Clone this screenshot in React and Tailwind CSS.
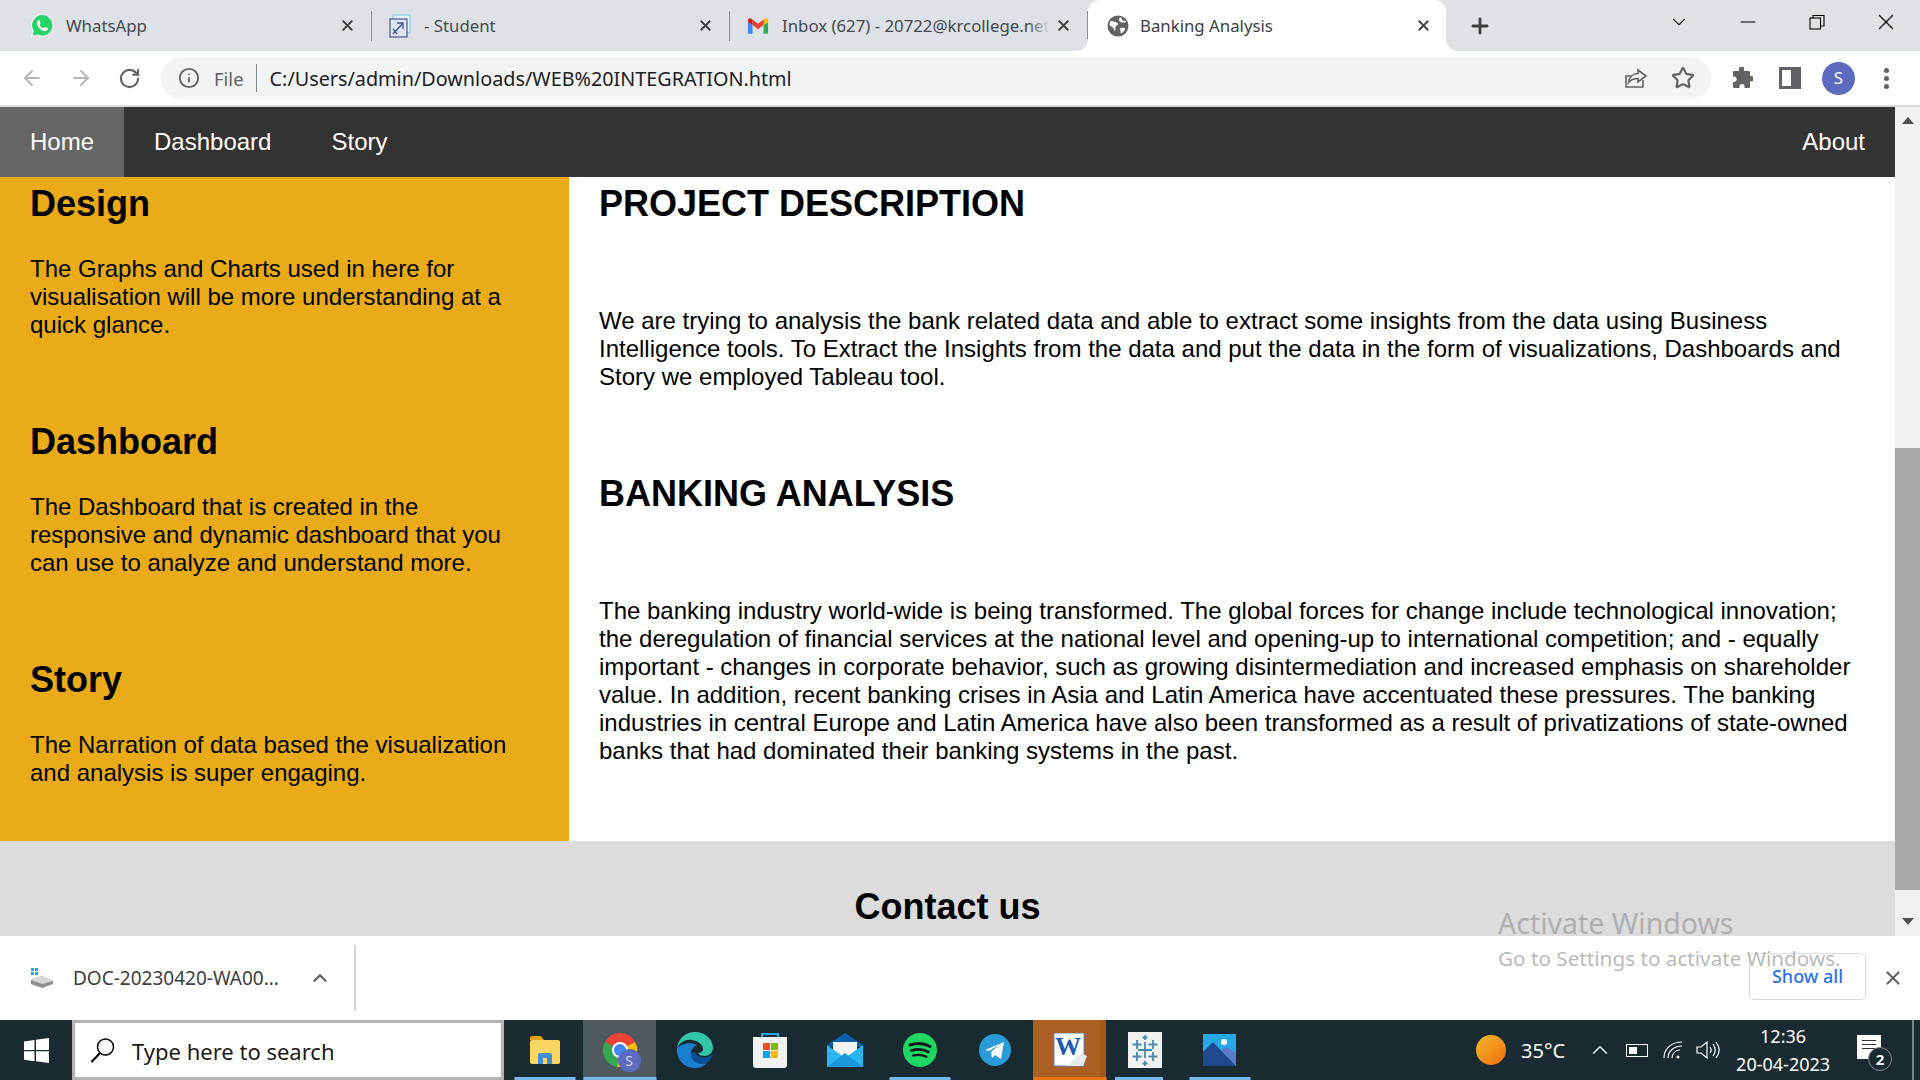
import { ArrowLeft, ArrowRight, RotateCw, Info, Star, X, Plus, ChevronDown, ChevronUp, Minus } from "lucide-react";

const uiFont = "font-['Noto_Sans',sans-serif]";

function WhatsAppIcon() {
  return (
    <svg width="25" height="25" viewBox="0 0 24 24">
      <path d="M12 1.500a10.400 10.400 0 0 0-8.900 15.800L1.600 22.600l5.400-1.400A10.400 10.400 0 1 0 12 1.500z" fill="#25d366" stroke="#fff" strokeWidth="1" />
      <path d="M8.600 6.800c-.3 0-.8.100-1.100.6-.4.500-1 1.300-1 2.500s.9 2.600 1.200 3c.3.400 1.800 2.800 4.300 3.800 2 .8 2.500.7 3 .6.600-.1 1.700-.7 2-1.400.2-.6.2-1.200.1-1.300l-2.300-1.200c-.3-.1-.5-.1-.7.100l-.9 1.100c-.2.200-.3.200-.6.100-1.400-.7-2.500-1.500-3.400-3-.2-.3 0-.4.100-.6l.7-.9c.1-.2.100-.4 0-.6L9.200 7.200c-.2-.4-.4-.4-.6-.4z" fill="#fff" />
    </svg>
  );
}

function StudentIcon() {
  return (
    <svg width="24" height="24" viewBox="0 0 24 24" fill="none">
      <rect x="5" y="1" width="17" height="18" fill="#e8f3fb" stroke="#8fd0ea" strokeWidth="1.200" />
      <rect x="2" y="5" width="17" height="18" fill="#dfe5f2" stroke="#44558f" strokeWidth="1.200" />
      <path d="M5 20L15 9M9 9h6v6M5 15l4 5" stroke="#44558f" strokeWidth="1.300" />
    </svg>
  );
}

function GmailIcon() {
  return (
    <svg width="22" height="18" viewBox="0 0 24 18">
      <path d="M1 5v11a1.500 1.500 0 0 0 1.500 1.500H6V8z" fill="#4285f4" />
      <path d="M18 8v9.500h3.500A1.500 1.500 0 0 0 23 16V5z" fill="#34a853" />
      <path d="M18 2v6l5-3.500V3c0-2-2.200-3-3.700-1.900z" fill="#fbbc04" />
      <path d="M6 8V2l6 4.500L18 2v6l-6 4.500z" fill="#ea4335" />
      <path d="M1 3v2l5 3V2L4.700 1.100C3.200 0 1 1 1 3z" fill="#c5221f" />
    </svg>
  );
}

function GlobeIcon() {
  return (
    <svg width="22" height="22" viewBox="0 0 22 22" className="ml-[4px]">
      <circle cx="11" cy="11" r="10.500" fill="#5f6368" />
      <path d="M3 6.500c2-.5 3.500-.5 5 .5s3 .5 3 2-2 1-2.500 2.500S9 15 8 15.500s-1-2-2-3-2.500-1-3.500-2.500zM14 2.500c1.500 1 .5 2.500 1.500 3s3-.5 3.500 1c.3 1-2.500 1-4 1s-2.500-1-3-2.500.8-2.500 2-2.500zM13.500 13c1.500-.5 4-.5 4.500.5s-1.500 3.500-3 4.500-1.500-1-1.500-2-1-2.500 0-3z" fill="#fff" />
    </svg>
  );
}

function Tab({ icon, title, active, fade }) {
  return (
    <div className={`relative flex h-[51px] w-[358px] shrink-0 items-center pl-[18px] ${active ? "rounded-t-[12px] bg-white" : ""}`}>
      {active && (
        <>
          <div className="absolute -left-[12px] bottom-0 h-[12px] w-[12px] bg-white">
            <div className="h-full w-full rounded-br-[12px] bg-[#dee1e6]" />
          </div>
          <div className="absolute -right-[12px] bottom-0 h-[12px] w-[12px] bg-white">
            <div className="h-full w-full rounded-bl-[12px] bg-[#dee1e6]" />
          </div>
        </>
      )}
      <div className="flex w-[20px] shrink-0 items-center justify-center [&>svg]:shrink-0">{icon}</div>
      <div className={`ml-[14px] w-[268px] overflow-hidden whitespace-nowrap text-[16.800px] ${active ? "text-[#3c4043]" : "text-[#45494e]"}`}>{title}</div>
      {fade && <div className="absolute left-[298px] top-[14px] h-[24px] w-[22px] bg-gradient-to-r from-transparent to-[#dee1e6]" />}
      <X size={17} strokeWidth={2.600} className="ml-[7px] shrink-0 text-[#3c4043]" />
      {!active && <div className="ml-[15px] h-[30px] w-px shrink-0 bg-[#8a8d91]" />}
    </div>
  );
}

function TabStrip() {
  return (
    <div className="flex h-[51px] shrink-0 items-center bg-[#dee1e6] pl-[14px]">
      <Tab icon={<WhatsAppIcon />} title="WhatsApp" />
      <Tab icon={<StudentIcon />} title="- Student" />
      <Tab icon={<GmailIcon />} title="Inbox (627) - 20722@krcollege.net" fade />
      <Tab icon={<GlobeIcon />} title="Banking Analysis" active />
      <Plus size={24} strokeWidth={2.800} className="ml-[22px] text-[#3c4043]" />
      <ChevronDown size={22} strokeWidth={1.200} className="ml-[176px] -mt-[7px] text-[#222]" />
      <div className="-mt-[7px] ml-[46px] flex items-center">
        <Minus size={24} strokeWidth={1.200} className="text-black" />
        <svg width="16" height="16" viewBox="0 0 16 16" fill="none" stroke="#000" strokeWidth="1.100" className="ml-[49px]">
          <rect x="1" y="4" width="10.500" height="11" />
          <path d="M4 4V1.500h11V12h-3.500" />
        </svg>
        <X size={26} strokeWidth={1.100} className="ml-[48px] text-black" />
      </div>
    </div>
  );
}

function Toolbar() {
  return (
    <div className="flex h-[54px] shrink-0 items-center bg-white">
      <ArrowLeft size={24} strokeWidth={1.800} className="ml-[20px] text-[#b4b6b9]" />
      <ArrowRight size={24} strokeWidth={1.800} className="ml-[25px] text-[#b4b6b9]" />
      <RotateCw size={23} strokeWidth={2.200} className="ml-[25px] text-[#5f6368]" />
      <div className="ml-[20px] flex h-[42px] w-[1550px] items-center rounded-full bg-[#f1f3f4]">
        <Info size={22} strokeWidth={2} className="ml-[17px] text-[#5f6368]" />
        <span className="ml-[14px] mt-[1px] text-[18.500px] text-[#5f6368]">File</span>
        <div className="ml-[12px] h-[28px] w-px bg-[#80868b]" />
        <span className="ml-[13px] mt-[1px] text-[19.800px] text-[#202124]">C:/Users/admin/Downloads/WEB%20INTEGRATION.html</span>
        <svg width="24" height="22" viewBox="0 0 24 22" fill="none" stroke="#5f6368" strokeWidth="1.600" className="ml-auto">
          <path d="M19 13v7H2V9h5" />
          <path d="M14 3l8 6-8 6v-3.500c-4 0-7 1-9.500 4 .7-5 4-9 9.500-9z" />
        </svg>
        <Star size={24} strokeWidth={2.200} className="ml-[23px] mr-[16px] text-[#5f6368]" />
      </div>
      <svg width="22" height="22" viewBox="0 0 22 22" className="ml-[20px]">
        <path d="M8 1.500a2.500 2.500 0 0 1 5 0V4h5a1 1 0 0 1 1 1v4h1.500a2.800 2.800 0 0 1 0 5.500H19V20a1 1 0 0 1-1 1h-4.500v-1.500a2.500 2.500 0 0 0-5 0V21H3a1 1 0 0 1-1-1v-5h1.500a2.800 2.800 0 0 0 0-5.500H2V5a1 1 0 0 1 1-1h5z" fill="#5f6368" />
      </svg>
      <div className="ml-[26px] flex h-[22px] w-[22px] justify-start border-[3px] border-[#5f6368] bg-white">
        <div className="ml-auto h-full w-[7px] bg-[#5f6368]" />
      </div>
      <div className="ml-[21px] flex h-[33px] w-[33px] items-center justify-center rounded-full bg-[#5c6bc0] text-[17px] text-white">S</div>
      <div className="ml-[29px] flex flex-col gap-[3px]">
        <div className="h-[5px] w-[5px] rounded-full bg-[#5f6368]" />
        <div className="h-[5px] w-[5px] rounded-full bg-[#5f6368]" />
        <div className="h-[5px] w-[5px] rounded-full bg-[#5f6368]" />
      </div>
    </div>
  );
}

function NavBar() {
  return (
    <nav className="flex h-[70px] shrink-0 items-stretch bg-[#333333] text-[24px] text-white">
      <a className="flex items-center bg-[#666666] px-[30px]">Home</a>
      <a className="flex items-center px-[30px]">Dashboard</a>
      <a className="flex items-center px-[30px]">Story</a>
      <a className="ml-auto flex items-center px-[30px]">About</a>
    </nav>
  );
}

function Sidebar() {
  const items = [
    { title: "Design", text: ["The Graphs and Charts used in here for", "visualisation will be more understanding at a", "quick glance."] },
    { title: "Dashboard", text: ["The Dashboard that is created in the", "responsive and dynamic dashboard that you", "can use to analyze and understand more."] },
    { title: "Story", text: ["The Narration of data based the visualization", "and analysis is super engaging."] },
  ];
  return (
    <aside className="flex h-[664px] w-[569px] shrink-0 flex-col gap-[82px] bg-[#e9ab17] pl-[30px] pt-[6px]">
      {items.map((item) => (
        <section key={item.title}>
          <h2 className="mb-[31px] text-[36px] font-bold leading-[41px] text-black">{item.title}</h2>
          {item.text.map((line) => (
            <p key={line} className="text-[24px] leading-[28px] text-black">{line}</p>
          ))}
        </section>
      ))}
    </aside>
  );
}

function MainText() {
  return (
    <main className="flex-1 pl-[30px] pt-[6px] text-black">
      <h2 className="text-[36px] font-bold leading-[41px]">PROJECT DESCRIPTION</h2>
      <p className="mt-[83px] text-[24px] leading-[28px]">
        We are trying to analysis the bank related data and able to extract some insights from the data using Business<br />
        Intelligence tools. To Extract the Insights from the data and put the data in the form of visualizations, Dashboards and<br />
        Story we employed Tableau tool.
      </p>
      <h2 className="mt-[82px] text-[36px] font-bold leading-[41px]">BANKING ANALYSIS</h2>
      <p className="mt-[83px] text-[24px] leading-[28px]">
        The banking industry world-wide is being transformed. The global forces for change include technological innovation;<br />
        the deregulation of financial services at the national level and opening-up to international competition; and - equally<br />
        important - changes in corporate behavior, such as growing disintermediation and increased emphasis on shareholder<br />
        value. In addition, recent banking crises in Asia and Latin America have accentuated these pressures. The banking<br />
        industries in central Europe and Latin America have also been transformed as a result of privatizations of state-owned<br />
        banks that had dominated their banking systems in the past.
      </p>
    </main>
  );
}

function Scrollbar() {
  return (
    <div className="flex w-[25px] shrink-0 flex-col items-center bg-[#f1f1f1]">
      <div className="mt-[10px] h-0 w-0 border-x-[6px] border-b-[7px] border-x-transparent border-b-[#505050]" />
      <div className="mt-[324px] h-[442px] w-full bg-[#a8a8a8]" />
      <div className="mt-[28px] h-0 w-0 border-x-[6px] border-t-[7px] border-x-transparent border-t-[#505050]" />
    </div>
  );
}

function DownloadBar() {
  return (
    <div className="flex h-[84px] shrink-0 items-center bg-white">
      <svg width="24" height="22" viewBox="0 0 24 22" className="ml-[30px]">
        <path d="M1 1h3v3H1zM5 1h3v3H5zM1 5h3v3H1zM5 5h3v3H5z" fill="#1aa9e8" />
        <path d="M1 13l11-4 11 5v3l-11 4-11-4z" fill="#8e8e8e" />
        <path d="M1 13l11 4 11-3-11-5z" fill="#d8d8d8" />
      </svg>
      <span className="ml-[19px] w-[207px] whitespace-nowrap text-[19px] text-[#3c4043]">DOC-20230420-WA00...</span>
      <ChevronUp size={22} strokeWidth={2.600} className="ml-[29px] text-[#5f6368]" />
      <div className="ml-[23px] h-[66px] w-[2px] bg-[#cfcfcf]" />
      <button className="-mt-[3px] ml-auto h-[47px] w-[117px] rounded-[5px] border border-[#dadce0] text-[18px] font-medium text-[#2a6ff2]">Show all</button>
      <X size={22} strokeWidth={2.400} className="ml-[16px] mr-[16px] text-[#5f6368]" />
    </div>
  );
}

function ChromeLogo() {
  return (
    <div className="relative h-[34px] w-[34px]">
      <svg width="34" height="34" viewBox="0 0 34 34">
        <path d="M17 17L2 9a17 17 0 0 1 30 0z" fill="#ea4335" />
        <path d="M17 17L2 9a17 17 0 0 0 12 25z" fill="#34a853" />
        <path d="M17 17l15-8a17 17 0 0 1-18 25z" fill="#fbbc04" />
        <circle cx="17" cy="17" r="8" fill="#fff" />
        <circle cx="17" cy="17" r="6" fill="#4285f4" />
      </svg>
      <div className="absolute -bottom-[5px] -right-[4px] flex h-[23px] w-[23px] items-center justify-center rounded-full bg-[#5c6bc0] text-[14px] text-[#d5d9f2]">S</div>
    </div>
  );
}

const taskIcons = [
  {
    id: "files",
    bar: "w-[61px] bg-[#76b9ed]",
    icon: (
      <svg width="32" height="30" viewBox="0 0 32 30">
        <path d="M1 3a2 2 0 0 1 2-2h9l3 4H1z" fill="#e0a30b" />
        <rect x="1" y="5" width="30" height="24" rx="2" fill="#fcd662" />
        <path d="M9 29v-9a2 2 0 0 1 2-2h10a2 2 0 0 1 2 2v9h-5v-6h-4v6z" fill="#3f8fd2" />
      </svg>
    ),
  },
  { id: "chrome", active: true, bar: "w-full bg-[#76b9ed]", icon: <ChromeLogo /> },
  {
    id: "edge",
    icon: (
      <svg width="36" height="36" viewBox="0 0 36 36">
        <path d="M18 0C8 0 1 7 0 16c3-6 9-9 15-8 7 1 11 5 11 9 0 3-3 4-5 4 1 2 3 3 7 3 3 0 8-3 8-8C36 7 28 0 18 0z" fill="#32c6a6" />
        <path d="M0 16C-1 27 7 36 18 36c5 0 9-2 12-5-7 2-15-1-16-8-.7-5 3-9 6-10-8-4-17 0-20 3z" fill="#1a7fd1" />
        <path d="M14 23c1 7 9 10 16 8 3-2 5-5 6-9-3 3-7 4-11 3-4-.5-6-2-7-5-2 0-4 1-4 3z" fill="#0c4f96" />
      </svg>
    ),
  },
  {
    id: "store",
    icon: (
      <svg width="34" height="36" viewBox="0 0 34 36">
        <path d="M9 7V2h16v5" fill="none" stroke="#2aa9e0" strokeWidth="2" />
        <path d="M0 5h34v28a3 3 0 0 1-3 3H3a3 3 0 0 1-3-3z" fill="#f2f2f2" />
        <rect x="10" y="11" width="7" height="7" fill="#f25022" />
        <rect x="18" y="11" width="7" height="7" fill="#7fba00" />
        <rect x="10" y="19" width="7" height="7" fill="#00a4ef" />
        <rect x="18" y="19" width="7" height="7" fill="#ffb900" />
      </svg>
    ),
  },
  {
    id: "mail",
    icon: (
      <svg width="36" height="34" viewBox="0 0 36 34">
        <path d="M0 12L18 0l18 12v2H0z" fill="#0a5ea8" />
        <path d="M6 9h24v14H6z" fill="#f3f3f3" />
        <path d="M0 12l18 13 18-13v22H0z" fill="#29b6f0" />
        <path d="M0 34l18-14 18 14z" fill="#1b97dc" />
      </svg>
    ),
  },
  {
    id: "spotify",
    bar: "w-[61px] bg-[#76b9ed]",
    icon: (
      <svg width="34" height="34" viewBox="0 0 34 34" fill="none">
        <circle cx="17" cy="17" r="17" fill="#1ed760" />
        <path d="M7 12c6-2 14-2 20 1.500" stroke="#14181a" strokeWidth="3" strokeLinecap="round" />
        <path d="M8.500 17.500c5-1.500 12-1.200 17 1.500" stroke="#14181a" strokeWidth="2.600" strokeLinecap="round" />
        <path d="M10 22.500c4-1 9.500-.8 13.500 1.200" stroke="#14181a" strokeWidth="2.200" strokeLinecap="round" />
      </svg>
    ),
  },
  {
    id: "telegram",
    icon: (
      <svg width="32" height="32" viewBox="0 0 32 32">
        <circle cx="16" cy="16" r="16" fill="#2a9bd8" />
        <path d="M6 16L25 8l-3 17-6-4-3 3-1-6 9-8-11 7z" fill="#fff" />
      </svg>
    ),
  },
  {
    id: "word",
    cell: "bg-[#ab5f25]",
    bar: "w-full bg-[#f07016]",
    stripe: true,
    icon: (
      <svg width="34" height="34" viewBox="0 0 34 34" className="relative">
        <rect x="1" y="0" width="30" height="33" fill="#fff" stroke="#5a86c4" />
        <path d="M28 20l6 3-4 10H14z" fill="#e6e9ee" />
        <text x="2" y="22" fontFamily="Liberation Serif, serif" fontWeight="700" fontSize="26" fill="#1e5cb3">W</text>
      </svg>
    ),
  },
  {
    id: "tableau",
    bar: "w-[48px] -ml-[6px] bg-[#76b9ed]",
    icon: (
      <svg width="34" height="36" viewBox="0 0 34 36" fill="none" stroke="#4a88ad" strokeWidth="1.800">
        <rect x="0" y="0" width="34" height="36" fill="#f1f2f2" stroke="none" />
        <path d="M17 10v16M10 18h14M9 8v9M4.500 12.500h9M25 8v9M20.500 12.500h9M9 20v9M4.500 24.500h9M25 20v9M20.500 24.500h9M17 3v5M14.500 5.500h5M17 29v5M14.500 31.500h5" />
      </svg>
    ),
  },
  {
    id: "photos",
    bar: "w-[61px] bg-[#76b9ed]",
    icon: (
      <svg width="33" height="32" viewBox="0 0 33 32">
        <rect width="33" height="32" fill="#27a9e6" />
        <circle cx="21" cy="8" r="3" fill="#fff" />
        <path d="M0 32V18L10 8l23 24z" fill="#1c4a8c" />
        <path d="M18 16l5-3 10 6v13z" fill="#5a79c9" />
      </svg>
    ),
  },
];

function Taskbar() {
  return (
    <div className="flex h-[60px] shrink-0 items-center bg-[#1a2a31] text-white">
      <div className="flex w-[72px] justify-center">
        <svg width="25" height="25" viewBox="0 0 25 25" fill="#fff">
          <path d="M0 3.500l10.500-1.500v10H0zM12 1.800L25 0v12H12zM0 13.200h10.500v10L0 21.700zM12 13.200h13V25l-13-1.800z" />
        </svg>
      </div>
      <div className="flex h-[60px] w-[432px] items-center border-[3px] border-[#b4b4b4] bg-white text-[#1a1a1a]">
        <svg width="25" height="25" viewBox="0 0 25 25" fill="none" stroke="#000" strokeWidth="1.500" className="ml-[15px]">
          <circle cx="15.500" cy="9" r="8" />
          <path d="M10 15L1.500 24" strokeWidth="2" />
        </svg>
        <span className="ml-[17px] mt-[2px] text-[22px]">Type here to search</span>
      </div>
      <div className="ml-[3px] flex">
        {taskIcons.map((item) => (
          <div key={item.id} className={`relative mx-px flex h-[60px] w-[73px] items-center justify-center ${item.active ? "bg-[#4e5a60]" : ""} ${item.cell || ""}`}>
            {item.stripe && <div className="absolute right-0 top-0 h-full w-[6px] bg-[#a35718]" />}
            {item.icon}
            {item.bar && <div className={`absolute bottom-0 left-1/2 h-[3px] -translate-x-1/2 ${item.bar}`} />}
          </div>
        ))}
      </div>
      <div className="ml-[219px] h-[30px] w-[30px] rounded-full bg-gradient-to-br from-[#f2b92a] to-[#ee6a0c]" />
      <span className="ml-[15px] mt-[2px] text-[20px]">35°C</span>
      <ChevronUp size={26} strokeWidth={1.200} className="ml-[22px]" />
      <div className="ml-[13px] flex h-[13px] w-[22px] items-center border border-white p-[2px]">
        <div className="h-full w-[8px] bg-white" />
      </div>
      <svg width="20" height="18" viewBox="0 0 20 18" fill="none" stroke="#fff" strokeWidth="1.100" className="ml-[15px]">
        <path d="M1 17C1 8 8 1 19 1M5 17c0-6 5-12 14-12M9 17c0-4 3-8 8-8" />
        <circle cx="15" cy="16" r="1.500" fill="#fff" stroke="none" />
      </svg>
      <svg width="24" height="20" viewBox="0 0 24 20" fill="none" stroke="#fff" strokeWidth="1.200" className="ml-[13px]">
        <path d="M1 7h4l6-5v16l-6-5H1zM14 7c1.500 2 1.500 4 0 6M17 4c3 4 3 8 0 12M20 2c4 5 4 11 0 16" />
      </svg>
      <div className="ml-[4px] flex w-[118px] flex-col items-center text-[18px] leading-[28px]">
        <span>12:36</span>
        <span>20-04-2023</span>
      </div>
      <div className="relative -mt-[6px] ml-[15px] h-[24px] w-[24px] bg-white">
        <div className="mx-[5px] mt-[5px] h-px bg-[#333]" />
        <div className="mx-[5px] mt-[3px] h-px bg-[#333]" />
        <div className="mx-[5px] mt-[3px] h-px bg-[#333]" />
        <div className="absolute -bottom-[12px] left-[11px] flex h-[24px] w-[24px] items-center justify-center rounded-full border border-[#888] bg-[#1a2a31] text-[15px] font-bold text-white">2</div>
      </div>
      <div className="ml-auto mr-[6px] h-full w-[2px] bg-[#7a8388]" />
    </div>
  );
}

export default function App() {
  return (
    <div className={`relative flex h-[1080px] w-[1920px] flex-col overflow-hidden bg-white ${uiFont}`}>
      <TabStrip />
      <Toolbar />
      <div className="h-[2px] shrink-0 bg-[#dadada]" />
      <div className="flex h-[829px] shrink-0">
        <div className="flex w-[1895px] shrink-0 flex-col overflow-hidden font-['Liberation_Sans',Arial,sans-serif]">
          <NavBar />
          <div className="flex shrink-0">
            <Sidebar />
            <MainText />
          </div>
          <footer className="flex-1 bg-[#dcdcdc] pt-[45px] text-center">
            <h2 className="text-[36px] font-bold leading-[41px] text-black">Contact us</h2>
          </footer>
        </div>
        <Scrollbar />
      </div>
      <DownloadBar />
      <Taskbar />
      {/* watermark sits over the page */}
      <div className="pointer-events-none absolute left-[1498px] top-[903px] text-[#9a9a9a]/70">
        <div className="text-[28.500px] leading-[40px]">Activate Windows</div>
        <div className="text-[20.700px] leading-[30px]">Go to Settings to activate Windows.</div>
      </div>
    </div>
  );
}
